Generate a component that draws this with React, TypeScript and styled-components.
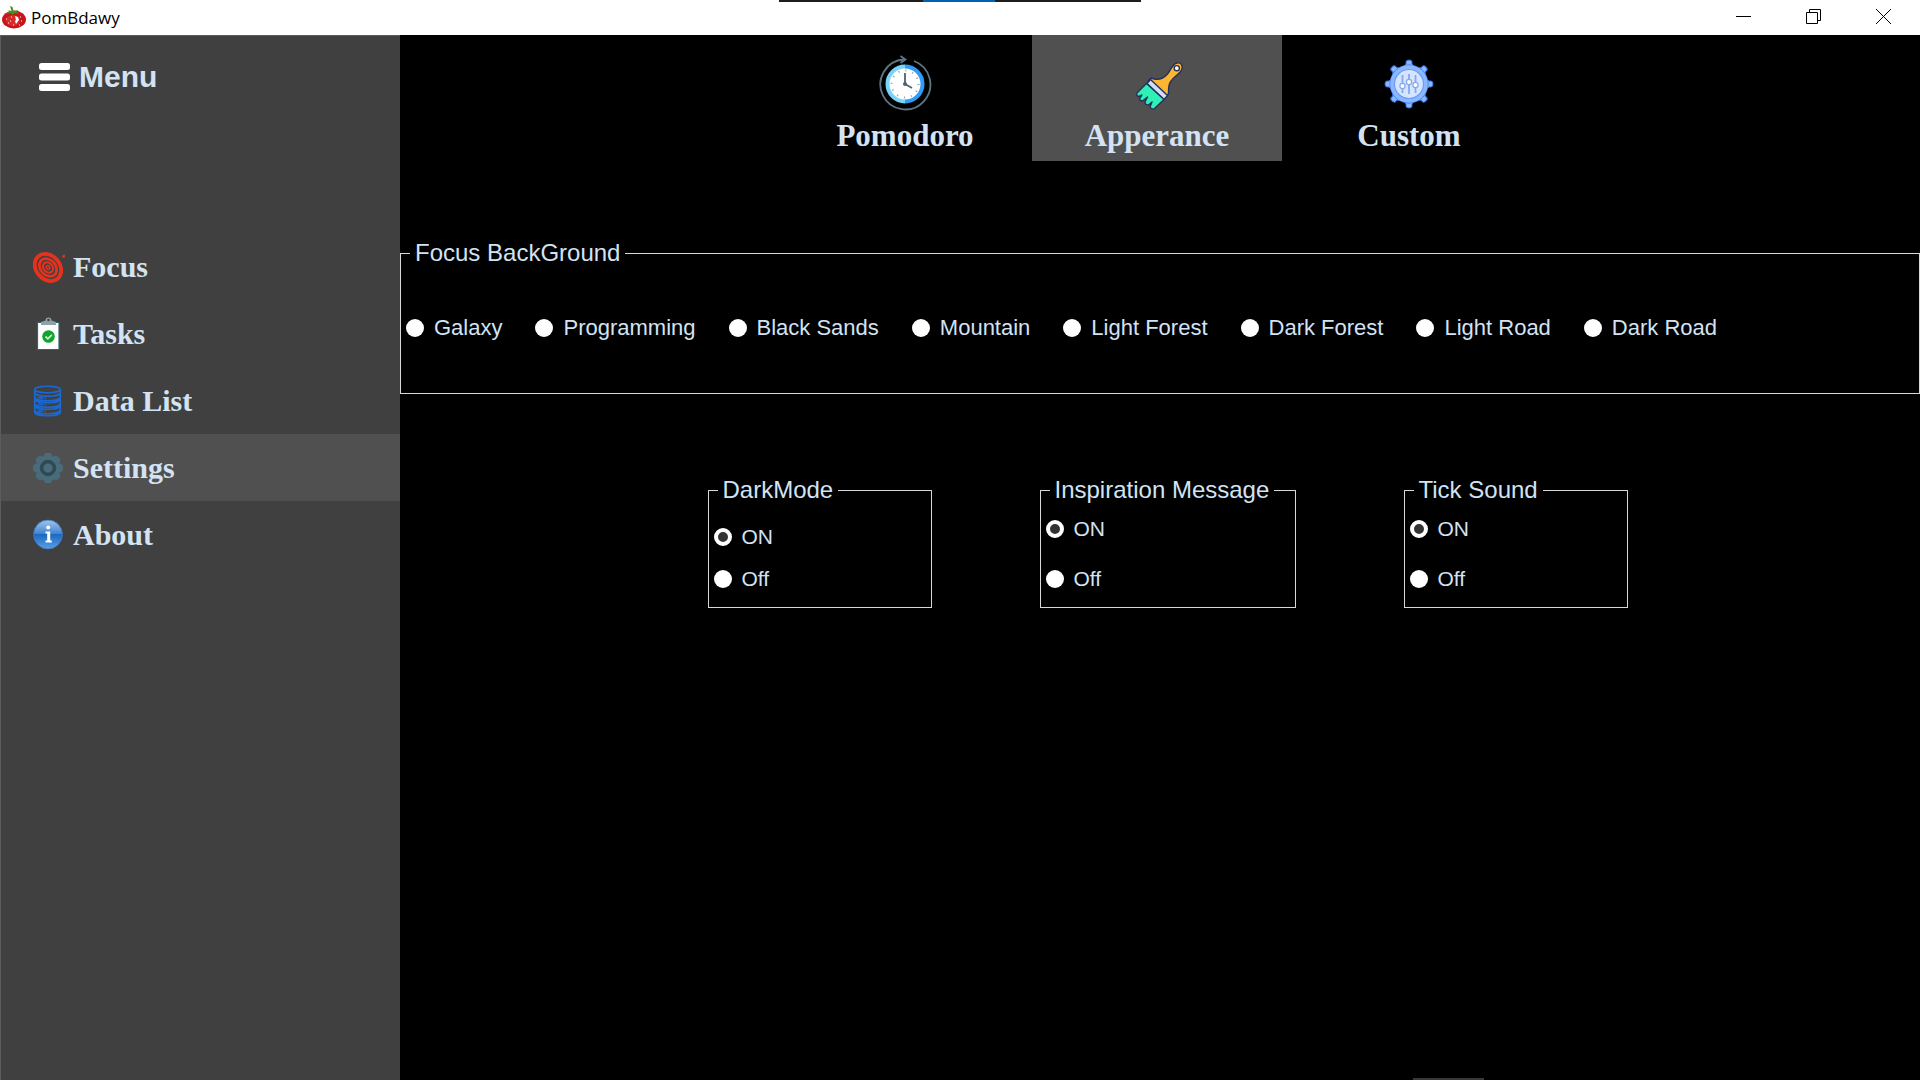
import React, { useState } from "react";
import styled, { createGlobalStyle } from "styled-components";

const Global = createGlobalStyle`
  *, *::before, *::after { box-sizing: border-box; }
  body {
    margin: 0;
    background: #000;
    font-family: "Liberation Sans", Arial, sans-serif;
    color: #d3e3f3;
  }
`;

const Window = styled.div`
  min-height: 100vh;
  display: flex;
  flex-direction: column;
  position: relative;
`;

const TitleBar = styled.header`
  display: flex;
  align-items: center;
  height: 35px;
  padding-right: 2px;
  background: #fff;
  color: #000;
`;

const AppTitle = styled.h1`
  display: flex;
  align-items: center;
  gap: 5px;
  flex: 1;
  margin: 0;
  padding-left: 2px;
  font: 400 17px/24px "Open Sans", "Noto Sans", sans-serif;
`;

const WindowButton = styled.button`
  display: grid;
  place-items: center;
  width: 70px;
  height: 34px;
  padding: 0 0 2px;
  border: 0;
  background: none;
`;

const CallStrip = styled.div`
  position: absolute;
  top: 0;
  left: 50%;
  width: 362px;
  height: 2px;
  margin-left: -181px;
  background: linear-gradient(90deg, #1f1c1c 144px, #0063b1 144px 216px, #1f1c1c 216px);
`;

const BottomStrip = styled.div`
  position: absolute;
  right: 436px;
  bottom: 0;
  width: 71px;
  height: 2px;
  background: #383838;
`;

const Body = styled.div`
  display: flex;
  flex: 1;
`;

const Sidebar = styled.aside`
  width: 400px;
  flex: none;
  background: #404040;
  border: 1px solid #5c5c5c;
  border-width: 1px 0 0 1px;
`;

const MenuButton = styled.button`
  display: flex;
  align-items: center;
  gap: 9px;
  width: 100%;
  height: 82px;
  padding: 0 0 0 38px;
  border: 0;
  background: none;
  color: inherit;
  font: 700 30px/36px "Liberation Sans", Arial, sans-serif;
`;

const Nav = styled.nav`
  display: flex;
  flex-direction: column;
  padding-top: 115px;
`;

const NavItem = styled.button<{ $active?: boolean }>`
  display: flex;
  align-items: center;
  gap: 8px;
  height: 67px;
  padding: 0 0 0 30px;
  border: 0;
  background: ${(p) => (p.$active ? "#505050" : "none")};
  color: inherit;
  font: 700 30px/36px "Palatino Linotype", Palatino, "Liberation Serif", serif;
`;

const Main = styled.main`
  flex: 1;
  min-width: 0;
`;

const Tabs = styled.div`
  display: flex;
  justify-content: center;
  gap: 2px;
  padding-right: 6px;
`;

const Tab = styled.button<{ $active?: boolean }>`
  display: flex;
  flex-direction: column;
  align-items: center;
  gap: 7px;
  width: 250px;
  height: 126px;
  padding: 20px 0 0;
  border: 0;
  background: ${(p) => (p.$active ? "#505050" : "none")};
  color: inherit;
  font: 700 31px/36px "Palatino Linotype", Palatino, "Liberation Serif", serif;
`;

const Group = styled.fieldset`
  min-width: 0;
  margin: 0;
  padding: 0 0 0 5px;
  border: 1px solid #d8d8d8;
`;

const Legend = styled.legend`
  margin-left: 4px;
  padding: 0 5px;
  font-size: 24px;
  line-height: 28px;
`;

const Backgrounds = styled(Group)`
  margin-top: 78px;
`;

const BackgroundRow = styled.div`
  display: flex;
  align-items: center;
  gap: 33px;
  height: 126px;
  padding-bottom: 5px;
`;

const Option = styled.label<{ $size?: number }>`
  display: flex;
  align-items: center;
  gap: 10px;
  font-size: ${(p) => p.$size ?? 22}px;
  line-height: 26px;
  white-space: nowrap;
`;

const Radio = styled.input`
  appearance: none;
  width: 18px;
  height: 18px;
  margin: 0;
  border-radius: 50%;
  background: #fff;

  &:checked {
    border: 4px solid #fff;
    background: #333;
  }
`;

const Switches = styled.div`
  display: flex;
  justify-content: center;
  gap: 108px;
  margin-top: 82px;
  padding-left: 15px;
`;

const SwitchGroup = styled(Group)<{ $wide?: boolean }>`
  width: ${(p) => (p.$wide ? 256 : 224)}px;
`;

const SwitchRows = styled.div<{ $tight?: boolean }>`
  display: flex;
  flex-direction: column;
  justify-content: flex-end;
  gap: ${(p) => (p.$tight ? 16 : 24)}px;
  height: 103px;
  padding-bottom: 15px;
`;

const TomatoIcon = () => (
  <svg width="24" height="24" viewBox="0 0 24 24" aria-hidden="true">
    <ellipse cx="12" cy="13.500" rx="12" ry="9" fill="#c8141b" />
    <ellipse cx="11" cy="14.500" rx="7" ry="5.500" fill="#d92a2c" />
    <path d="M8 0l2.500 1 1 4 5-1-2 2 3 2-5-1-2 2-2-2-5 1 4-3-2-1 4 1z" fill="#4f8d22" />
    <path d="M13 10l3 1 1 3-3 4-1-3 1-1z" fill="#fff" />
    <path d="M4 13h1M6 17h1M9 11h1M8 15h1M11 19h1M18 11h1M19 15h1M17 19h1" stroke="#fff" />
  </svg>
);

const BarsIcon = () => (
  <svg width="31" height="30" viewBox="0 0 31 30" fill="#fff" aria-hidden="true">
    <rect y="1" width="31" height="7" rx="2.500" />
    <rect y="11.500" width="31" height="7" rx="2.500" />
    <rect y="22" width="31" height="7" rx="2.500" />
  </svg>
);

const TargetIcon = () => (
  <svg width="34" height="34" viewBox="0 0 34 34" fill="none" stroke="#e5321f" aria-hidden="true">
    <g transform="rotate(48 17 17.500)">
      <ellipse cx="17" cy="17.500" rx="14.800" ry="11.800" strokeWidth="3.800" />
      <ellipse cx="17" cy="17.500" rx="9.800" ry="7.600" strokeWidth="2.800" />
      <ellipse cx="17" cy="17.500" rx="5.600" ry="4.400" strokeWidth="2.200" />
      <ellipse cx="17" cy="17.500" rx="2" ry="1.500" strokeWidth="1.600" />
    </g>
    <path d="M31.500 7l2.500-1.500" strokeWidth="2.600" />
  </svg>
);

const ClipboardIcon = () => (
  <svg width="34" height="34" viewBox="0 0 34 34" aria-hidden="true">
    <path d="M6.500 5.500h21.500v27H6.500z" fill="#fff" stroke="#37616a" strokeWidth="1.200" />
    <path d="M10 8V5l4.500-1.500a3 3 0 0 1 6 0L25 5v3z" fill="#8ba4ac" />
    <circle cx="17.500" cy="3" r="1.300" fill="#404040" />
    <circle cx="17.500" cy="19.500" r="6.300" fill="#12a331" />
    <path d="M14.500 19.500l2.300 2.300 4-4" fill="none" stroke="#c9f0cf" strokeWidth="1.800" />
  </svg>
);

const DatabaseIcon = () => (
  <svg width="34" height="34" viewBox="0 0 34 34" fill="none" stroke="#1b68d2" strokeWidth="1.600" aria-hidden="true">
    <ellipse cx="16.500" cy="5.500" rx="12.800" ry="3.200" />
    <path d="M3.700 6v22c0 5 25.600 5 25.600 0V6M3.700 8.500c0 5 25.600 5 25.600 0M3.700 13c0 5 25.600 5 25.600 0M3.700 15c0 5 25.600 5 25.600 0M3.700 19.500c0 5 25.600 5 25.600 0M3.700 21.500c0 5 25.600 5 25.600 0M3.700 26c0 5 25.600 5 25.600 0" />
    <path d="M7 13.500l8 1M7 20l8 1M7 26.500l8 1" strokeDasharray="5 1.500" />
  </svg>
);

const teeth = [0, 45, 90, 135, 180, 225, 270, 315];

const GearIcon = () => (
  <svg width="34" height="34" viewBox="0 0 34 34" aria-hidden="true">
    {teeth.map((a) => (
      <path key={a} d="M13 5l1.500-2.500h5L21 5z" fill="#4a6b7a" stroke="#4a6b7a" transform={`rotate(${a} 17 17)`} />
    ))}
    <circle cx="17" cy="17" r="12.600" fill="#4a6b7a" />
    <circle cx="17" cy="17" r="6.400" fill="#4a6b7a" stroke="#2e4a55" strokeWidth="3.600" />
  </svg>
);

const InfoIcon = () => (
  <svg width="34" height="34" viewBox="0 0 34 34" aria-hidden="true">
    <defs>
      <linearGradient id="info" x2="0" y2="1">
        <stop offset="0" stopColor="#a4c6ea" />
        <stop offset=".48" stopColor="#3f83d0" />
        <stop offset=".5" stopColor="#1c68c2" />
        <stop offset="1" stopColor="#5b9fe4" />
      </linearGradient>
    </defs>
    <circle cx="17" cy="16.500" r="14.400" fill="url(#info)" stroke="#3a7cc9" strokeWidth=".8" />
    <circle cx="17.200" cy="9.500" r="2" fill="#fff" />
    <path d="M14.500 13.500h4.700v9h1.500v2h-6.200v-2h1.700v-7h-1.700z" fill="#fff" />
  </svg>
);

const ClockIcon = () => (
  <svg width="54" height="56" viewBox="0 1 54 56" fill="none" aria-hidden="true">
    <path d="M36 7A25 25 0 1 1 26 5.500" stroke="#5f7480" strokeWidth="1.800" />
    <path d="M22.500 2l5 3.500-5 3.500" stroke="#5f7480" strokeWidth="1.800" />
    <circle cx="27" cy="30" r="18" fill="#fff" />
    <path d="M27 12.500a17.500 17.500 0 0 0 0 35" stroke="#79d5f8" strokeWidth="4" />
    <path d="M27 12.500a17.500 17.500 0 0 1 0 35" stroke="#2f9cf5" strokeWidth="4" />
    <circle cx="27" cy="30" r="13.500" stroke="#8d9aa3" strokeWidth="2" strokeDasharray="1 6.070" />
    <path d="M27 19v11l7 4" stroke="#4d6470" strokeWidth="1.800" />
    <circle cx="27" cy="30" r="2" fill="#4d6470" />
  </svg>
);

const BrushIcon = () => (
  <svg width="54" height="56" viewBox="0 0 54 56" strokeLinejoin="round" aria-hidden="true">
    <g stroke="#24315e" strokeWidth="1.400">
      <path d="M21 23C28 26 33 24 37.500 19C41 15 42 9 47 8C52 7 53.500 12 51 16C48 20 43.500 22 41 26C38 30 38.500 34 38.500 39L35 42L18 26Z" fill="#fdb62f" />
      <path d="M20.500 24.500L37.500 40.500L34 44.500L17 28.500Z" fill="#d5dcf8" />
      <path d="M16.500 28.500L34 44.500L24 54Q21.500 54.500 20 52L22 47L18.500 50Q15 50 15 47L17.500 42L12.500 46Q10 46 9.500 44L12 40L9 41.500Q6 41 7 38Z" fill="#2ff0b5" />
      <circle cx="46.800" cy="13.200" r="2.600" fill="#fff" />
    </g>
  </svg>
);

const CustomIcon = () => (
  <svg width="54" height="56" viewBox="0 -1 54 56" aria-hidden="true">
    <g fill="#8ab7ff" stroke="#2f6fe0" strokeWidth="1">
      {teeth.map((a) => (
        <path key={a} d="M21 11l3-3V6q0-2 3-2t3 2v2l3 3z" transform={`rotate(${a} 27 28)`} />
      ))}
      <circle cx="27" cy="28" r="19" />
    </g>
    <circle cx="27" cy="28" r="18.700" fill="#8ab7ff" />
    <circle cx="27" cy="28" r="14.500" fill="#d5e4ff" stroke="#6b9ef5" strokeWidth="1.200" />
    <path d="M20.500 19v18M27 18v20M33.500 19v18" stroke="#86a8ee" strokeWidth="1.800" />
    <g fill="#fff" stroke="#86a8ee" strokeWidth="1.200">
      <circle cx="20.500" cy="30" r="2.600" />
      <circle cx="27" cy="26" r="2.600" />
      <circle cx="33.500" cy="29" r="2.600" />
    </g>
  </svg>
);

const navItems = [
  { name: "Focus", Icon: TargetIcon },
  { name: "Tasks", Icon: ClipboardIcon },
  { name: "Data List", Icon: DatabaseIcon },
  { name: "Settings", Icon: GearIcon },
  { name: "About", Icon: InfoIcon },
];

const tabs = [
  { name: "Pomodoro", Icon: ClockIcon },
  { name: "Apperance", Icon: BrushIcon },
  { name: "Custom", Icon: CustomIcon },
];

const backgrounds = [
  "Galaxy",
  "Programming",
  "Black Sands",
  "Mountain",
  "Light Forest",
  "Dark Forest",
  "Light Road",
  "Dark Road",
];

const switches = [
  { name: "DarkMode", tight: true },
  { name: "Inspiration Message", wide: true },
  { name: "Tick Sound" },
];

export default function App() {
  const [page, setPage] = useState("Settings");
  const [tab, setTab] = useState("Apperance");

  return (
    <Window>
      <Global />
      <TitleBar>
        <AppTitle>
          <TomatoIcon />
          PomBdawy
        </AppTitle>
        <WindowButton aria-label="Minimize">
          <svg width="15" height="15" stroke="#000"><path d="M0 7.500h15" /></svg>
        </WindowButton>
        <WindowButton aria-label="Restore">
          <svg width="15" height="15" stroke="#000" fill="none">
            <path d="M.5 3.500h11v11H.500zM3.500 3.500v-3h11v11h-3" />
          </svg>
        </WindowButton>
        <WindowButton aria-label="Close">
          <svg width="15" height="15" stroke="#000"><path d="M0 0l15 15M15 0L0 15" /></svg>
        </WindowButton>
      </TitleBar>
      <CallStrip />
      <Body>
        <Sidebar>
          <MenuButton>
            <BarsIcon />
            Menu
          </MenuButton>
          <Nav>
            {navItems.map(({ name, Icon }) => (
              <NavItem key={name} $active={page === name} onClick={() => setPage(name)}>
                <Icon />
                {name}
              </NavItem>
            ))}
          </Nav>
        </Sidebar>
        <Main>
          <Tabs>
            {tabs.map(({ name, Icon }) => (
              <Tab key={name} $active={tab === name} onClick={() => setTab(name)}>
                <Icon />
                {name}
              </Tab>
            ))}
          </Tabs>
          <Backgrounds>
            <Legend>Focus BackGround</Legend>
            <BackgroundRow>
              {backgrounds.map((name) => (
                <Option key={name}>
                  <Radio type="radio" name="background" />
                  {name}
                </Option>
              ))}
            </BackgroundRow>
          </Backgrounds>
          <Switches>
            {switches.map(({ name, wide, tight }) => (
              <SwitchGroup key={name} $wide={wide}>
                <Legend>{name}</Legend>
                <SwitchRows $tight={tight}>
                  <Option $size={21}>
                    <Radio type="radio" name={name} defaultChecked />
                    ON
                  </Option>
                  <Option $size={21}>
                    <Radio type="radio" name={name} />
                    Off
                  </Option>
                </SwitchRows>
              </SwitchGroup>
            ))}
          </Switches>
        </Main>
      </Body>
      <BottomStrip />
    </Window>
  );
}
